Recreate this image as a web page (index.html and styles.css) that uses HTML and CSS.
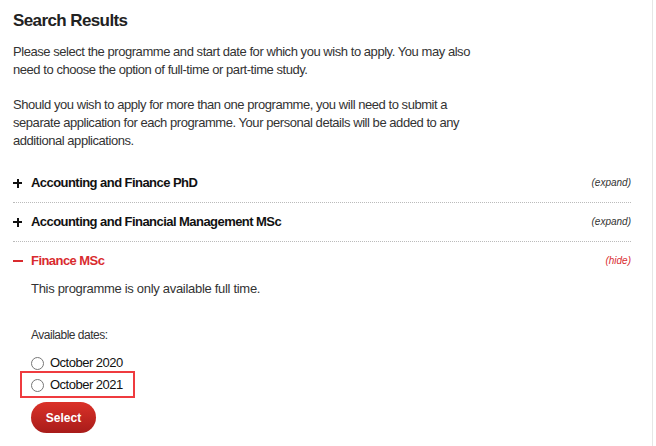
FILE: index.html
```html
<!DOCTYPE html>
<html lang="en">
<head>
    <meta charset="UTF-8">
    <meta name="viewport" content="width=device-width, initial-scale=1.0">
    <title>Search Results</title>
    <link rel="stylesheet" href="styles.css">
</head>
<body>
    <div class="sayfa">
        <h1>Search Results</h1>

        <p class="aciklama">Please select the programme and start date for which you wish to apply. You may also need to choose the option of full-time or part-time study.</p>
        <p class="aciklama">Should you wish to apply for more than one programme, you will need to submit a separate application for each programme. Your personal details will be added to any additional applications.</p>

        <div class="program-listesi">
            <div class="program">
                <div class="program-baslik">
                    <span class="ikon arti"></span>
                    <span class="program-adi">Accounting and Finance PhD</span>
                    <span class="durum">(expand)</span>
                </div>
            </div>
            <div class="program">
                <div class="program-baslik">
                    <span class="ikon arti"></span>
                    <span class="program-adi">Accounting and Financial Management MSc</span>
                    <span class="durum">(expand)</span>
                </div>
            </div>
            <div class="program acik">
                <div class="program-baslik">
                    <span class="ikon eksi"></span>
                    <span class="program-adi">Finance MSc</span>
                    <span class="durum">(hide)</span>
                </div>
                <div class="program-icerik">
                    <p class="bilgi">This programme is only available full time.</p>
                    <p class="tarih-baslik">Available dates:</p>
                    <label class="tarih">
                        <input type="radio" name="tarih"> October 2020
                    </label>
                    <label class="tarih vurgu">
                        <input type="radio" name="tarih"> October 2021
                    </label>
                    <button class="sec-buton">Select</button>
                </div>
            </div>
        </div>
    </div>
</body>
</html>
```

FILE: styles.css
```css
body {
    margin: 0;
    font-family: "Liberation Sans", Arial, sans-serif;
    color: #333;
    background: #fff;
}
.sayfa {
    padding: 10px 21px 0 13px;
    min-height: 446px;
    box-sizing: border-box;
    border-right: 1px solid #e6e6e6;
    width: 653px;
}
h1 {
    margin: 0 0 11px 0;
    font-size: 17px;
    line-height: 22px;
    letter-spacing: -0.6px;
    color: #222;
}
.aciklama {
    width: 470px;
    margin: 0 0 17px 0;
    font-size: 13px;
    line-height: 18px;
    letter-spacing: -0.45px;
}
.aciklama:last-of-type {
    margin-bottom: 0;
}
.program-listesi {
    margin-top: 14px;
}
.program {
    border-bottom: 1px dotted #bbb;
}
.program.acik {
    border-bottom: none;
}
.program-baslik {
    display: flex;
    align-items: center;
    padding: 10px 0;
    line-height: 18px;
}
.ikon {
    position: relative;
    width: 9px;
    height: 9px;
    margin: 0 9px 0 0;
    flex-shrink: 0;
}
.ikon::before,
.ikon::after {
    content: "";
    position: absolute;
    background: #111;
}
.ikon::before {
    left: 0;
    right: 0;
    top: 3px;
    height: 2px;
}
.arti::after {
    top: 0;
    bottom: 0;
    left: 3.5px;
    width: 2px;
}
.eksi::before {
    background: #d92b2f;
    left: 0;
    right: -1px;
}
.program-adi {
    flex: 1;
    font-size: 13px;
    font-weight: bold;
    letter-spacing: -0.55px;
    color: #111;
}
.acik .program-adi {
    color: #d92b2f;
}
.durum {
    font-size: 10px;
    font-style: italic;
    color: #333;
}
.acik .durum {
    color: #d92b2f;
}
.program-icerik {
    padding-left: 18px;
}
.bilgi {
    margin: 0;
    font-size: 13px;
    line-height: 18px;
    letter-spacing: -0.3px;
}
.tarih-baslik {
    margin: 29px 0 11px 0;
    font-size: 12px;
    line-height: 16px;
    letter-spacing: -0.5px;
}
.tarih {
    display: flex;
    align-items: center;
    gap: 6px;
    width: fit-content;
    font-size: 13px;
    line-height: 18px;
    letter-spacing: -0.5px;
    color: #111;
}
.tarih input {
    appearance: none;
    margin: 0;
    width: 13px;
    height: 13px;
    border: 1px solid #777;
    border-radius: 50%;
    background: #fff;
}
.vurgu {
    border: 2px solid #ef3b3f;
    padding: 3px 10px 2px 9px;
    margin: -1px 0 0 -11px;
}
.sec-buton {
    margin-top: 4px;
    width: 65px;
    height: 31px;
    border: none;
    border-radius: 16px;
    background: linear-gradient(#db3128, #a81c1a);
    color: #fff;
    font-family: inherit;
    font-weight: bold;
    font-size: 12px;
    cursor: pointer;
}
```
